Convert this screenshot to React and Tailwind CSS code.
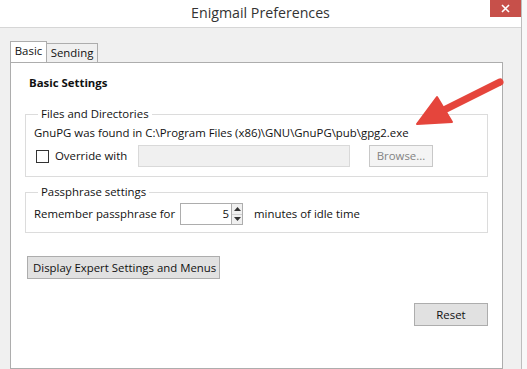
import React from 'react';

const font = { fontFamily: '"Open Sans", "Noto Sans", sans-serif' };

const Arrow = () => (
  <svg className="absolute left-0 top-0 pointer-events-none" width="527" height="369">
    <line x1="500" y1="82" x2="440" y2="112" stroke="#e5453c" strokeWidth="7" strokeLinecap="round" />
    <polygon points="417,124 437,97 452,122" fill="#e5453c" stroke="#e5453c" strokeWidth="2" strokeLinejoin="round" />
  </svg>
);

const Spinner = () => (
  <div className="flex flex-col w-[11px] h-[22px] border border-l-0 border-[#adadad] bg-[#f0f0f0]">
    <div className="flex-1 flex items-center justify-center border-b border-[#d0d0d0]">
      <svg width="7" height="4"><polygon points="0,4 3.5,0 7,4" fill="#333" /></svg>
    </div>
    <div className="flex-1 flex items-center justify-center">
      <svg width="7" height="4"><polygon points="0,0 3.5,4 7,0" fill="#333" /></svg>
    </div>
  </div>
);

export default function App() {
  return (
    <div className="relative w-[527px] h-[369px] overflow-hidden bg-[#f8f8f8] text-[11.4px] text-[#111] whitespace-nowrap" style={font}>
      <div className="w-[522px] h-full flex flex-col border-r border-[#bdbdbd] bg-[#f0f0f0]">
        {/* title bar */}
        <div className="relative h-[28px] shrink-0 bg-white border-b border-[#d6d6d6] flex items-center justify-center">
          <span className="text-[14.2px] text-[#333] -mt-[2px]">Enigmail Preferences</span>
          <div className="absolute right-0 top-0 w-[31px] h-[17px] bg-[#c7504a] flex items-center justify-center">
            <svg width="9" height="9"><path d="M1 1L8 8M8 1L1 8" stroke="white" strokeWidth="1.6" /></svg>
          </div>
        </div>

        <div className="flex-1 flex flex-col pl-[10px] pt-[14px] pr-[18px]">
          {/* tabs */}
          <div className="flex items-end h-[20px] relative z-10">
            <div className="h-[21px] w-[37px] flex justify-center bg-white border border-b-0 border-[#adadad] leading-[18px]">Basic</div>
            <div className="h-[19px] w-[51px] flex justify-center bg-[#f0f0f0] border border-l-0 border-b-0 border-[#adadad] leading-[18px]">Sending</div>
          </div>

          {/* panel */}
          <div className="flex-1 bg-white border border-[#adadad] w-[493px] pt-[12px]">
            <div className="pl-[18px] font-bold leading-[16px]">Basic Settings</div>

            <fieldset className="mx-[14px] mt-[15px] border border-[#dcdcdc] pl-[8px] pb-[9px]">
              <legend className="ml-[4px] px-[3px] leading-[16px]">Files and Directories</legend>
              <div className="mt-[3px] leading-[16px]">GnuPG was found in C:\Program Files (x86)\GNU\GnuPG\pub\gpg2.exe</div>
              <div className="flex items-center mt-[4px] h-[22px]">
                <div className="ml-[2px] w-[13px] h-[13px] border border-[#333] bg-white" />
                <span className="ml-[6px] w-[83px]">Override with</span>
                <div className="w-[212px] h-[22px] border border-[#d9d9d9] bg-[#f0f0f0]" />
                <div className="ml-[19px] w-[64px] h-[22px] border border-[#c8c8c8] bg-[#f4f4f4] text-[#838383] flex items-center justify-center">Browse...</div>
              </div>
            </fieldset>

            <fieldset className="mx-[14px] mt-[7px] border border-[#dcdcdc] pl-[8px] pb-[7px]">
              <legend className="ml-[4px] px-[3px] leading-[16px]">Passphrase settings</legend>
              <div className="flex items-center mt-[3px] h-[22px]">
                <span className="w-[146px]">Remember passphrase for</span>
                <div className="w-[52px] h-[22px] border border-[#adadad] bg-white flex items-center justify-end pr-[2px]">5</div>
                <Spinner />
                <span className="ml-[11px]">minutes of idle time</span>
              </div>
            </fieldset>

            <div className="pl-[16px] mt-[23px]">
              <div className="w-[193px] h-[23px] border border-[#adadad] bg-[#e1e1e1] flex items-center pl-[5px]">Display Expert Settings and Menus</div>
            </div>

            <div className="flex justify-end pr-[14px] mt-[24px]">
              <div className="w-[74px] h-[23px] border border-[#adadad] bg-[#e1e1e1] flex items-center justify-center">Reset</div>
            </div>
          </div>
        </div>
      </div>
      <Arrow />
    </div>
  );
}
